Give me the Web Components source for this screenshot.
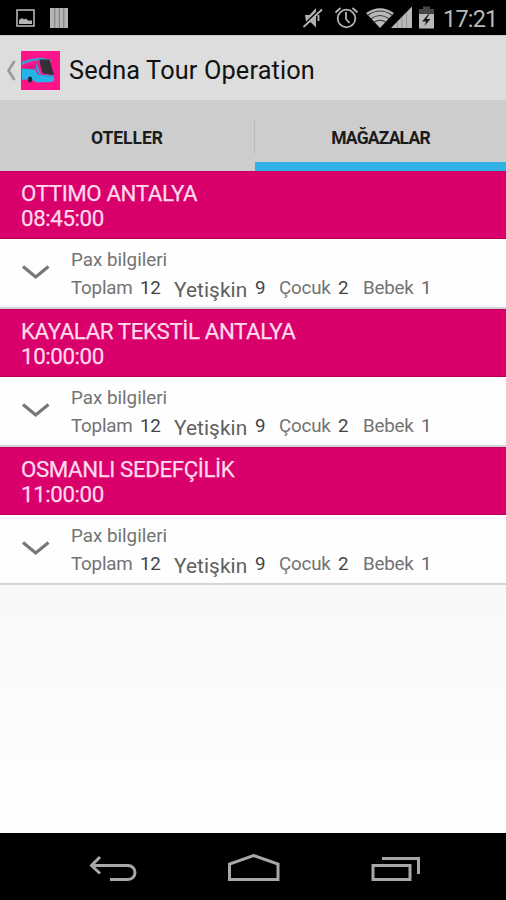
<!DOCTYPE html>
<html lang="tr">
<head>
<meta charset="utf-8">
<title>Sedna Tour Operation</title>
<style>
body {
  margin: 0;
  font-family: Roboto, "Liberation Sans", sans-serif;
}
</style>
</head>
<body>

<tour-screen>
  <status-bar slot="top" time="17:21"></status-bar>
  <action-bar slot="top" heading="Sedna Tour Operation"></action-bar>
  <tab-bar slot="top">
    <tab-item>OTELLER</tab-item>
    <tab-item active>MAĞAZALAR</tab-item>
  </tab-bar>
  <shop-card name="OTTIMO ANTALYA" time="08:45:00"></shop-card>
  <shop-card name="KAYALAR TEKSTİL ANTALYA" time="10:00:00"></shop-card>
  <shop-card name="OSMANLI SEDEFÇİLİK" time="11:00:00"></shop-card>
  <nav-bar slot="bottom"></nav-bar>
</tour-screen>

<script>
function attachTemplate(element, html) {
  const template = document.createElement('template')
  template.innerHTML = html
  element.attachShadow({ mode: 'open' })
  element.shadowRoot.appendChild(template.content.cloneNode(true))
}

class TourScreen extends HTMLElement {
  constructor() {
    super()
    attachTemplate(this, `
      <style>
        :host {
          display: flex;
          flex-direction: column;
          height: 900px;
          overflow: hidden;
        }
        main {
          flex: 1;
          background: linear-gradient(#f5f5f5, #f8f8f8 62%, #fff);
        }
      </style>
      <slot name="top"></slot>
      <main><slot></slot></main>
      <slot name="bottom"></slot>
    `)
  }
}
customElements.define('tour-screen', TourScreen)

class StatusBar extends HTMLElement {
  constructor() {
    super()
    attachTemplate(this, `
      <style>
        :host {
          display: flex;
          justify-content: space-between;
          height: 35px;
          background: #000;
          color: #b9b9b9;
          border-bottom: 1px solid #c9c9c9;
        }
        svg { display: block; }
        .right { display: flex; }
        .time {
          width: 63px;
          font-size: 23.5px;
          line-height: 38px;
          letter-spacing: -0.8px;
          white-space: nowrap;
        }
      </style>
      <svg width="80" height="35" viewBox="0 0 80 35">
        <rect x="17" y="10" width="17" height="16" fill="none" stroke="#b5b5b5" stroke-width="1.6"/>
        <path d="M19 24v-4l3-2 2 1.500 2-1 2 2h4v3.500z" fill="#b5b5b5"/>
        <path d="M50 8h18v20H50z" fill="#b5b5b5"/>
        <path d="M54.8 8v20M59.3 8v20M63.8 8v20" stroke="#777"/>
      </svg>
      <div class="right">
        <svg width="141" height="35" viewBox="302 0 141 35">
          <path d="M305 15h4.500l6.500-7v19.500l-5-5-5-.5z" fill="#b0b0b0"/>
          <path d="M303.500 25.500L321 8.500" stroke="#000" stroke-width="2"/>
          <path d="M303.500 27L322 9.500M318.500 15v6" stroke="#b5b5b5" stroke-width="1.800"/>
          <g fill="none" stroke="#b5b5b5" stroke-width="1.800">
            <circle cx="346.500" cy="18.500" r="8.800"/>
            <path d="M346 12v7l3.500 4M335.500 12.500l5-4.500M357.500 12.500l-5-4.500"/>
          </g>
          <path d="M366 13Q380 3.500 394 13L380 28z" fill="#b9b9b9"/>
          <path d="M367.500 15.500Q380 6.500 392.500 15.500M370.500 19Q380 12 389.500 19M373.800 22.500Q380 18 386.200 22.500" fill="none" stroke="#383838" stroke-width="1.100"/>
          <path d="M391 28l21-21.500v21.500z" fill="#b9b9b9"/>
          <path d="M397.500 21v7M402 17v11M406.500 12v16" stroke="#888" stroke-width=".8"/>
          <path d="M419 9h4V6.500h7V9h4v5h-15z" fill="#454545"/>
          <path d="M419 14h15v14.500h-15z" fill="#b9b9b9"/>
          <path d="M428.500 14L422 21.500h4l-1.500 4.500 6-7h-4l3-5z" fill="#181818"/>
        </svg>
        <div class="time"></div>
      </div>
    `)
  }

  connectedCallback() {
    this.shadowRoot.querySelector('.time').textContent = this.getAttribute('time')
  }
}
customElements.define('status-bar', StatusBar)

class ActionBar extends HTMLElement {
  constructor() {
    super()
    attachTemplate(this, `
      <style>
        :host {
          display: flex;
          align-items: center;
          height: 64px;
          padding-left: 6px;
          background: #ddd;
        }
        svg { display: block; margin-top: 3px; }
        h1 {
          margin: 5px 0 0 9px;
          font-size: 25.3px;
          line-height: 30px;
          font-weight: 400;
          letter-spacing: 0.15px;
          color: #111;
          white-space: nowrap;
        }
      </style>
      <svg width="54" height="40" viewBox="6 49 54 40">
        <path d="M14.500 60L8.500 69.500l6 9.500" fill="none" stroke="#999" stroke-width="2.600"/>
        <path d="M21 50h39v39H21z" fill="#ff1388"/>
        <path d="M22 60.500Q30 57.500 40 56.500l11 2 .5 2-13-1Q30 60 22 64z" fill="#4c96cd"/>
        <path d="M23 65.500l13-2 3 6.500-3-1.500-13-.5z" fill="#e01682"/>
        <path d="M22 67.500l13 1 3 5.500 5 .5 11 .5v5l-3 1-14 .5-4-2-11-1z" fill="#24b4e8"/>
        <path d="M36 61l5 12.500 13 1v2l-14-1.500-4-7z" fill="#2f9cdb"/>
        <path d="M39.500 58.500h10L54 74l-11-1.500q-2.500-5-3.500-14z" fill="#303238"/>
        <ellipse cx="30" cy="78.500" rx="2.200" ry="3" fill="#252a34"/>
      </svg>
      <h1></h1>
    `)
  }

  connectedCallback() {
    this.shadowRoot.querySelector('h1').textContent = this.getAttribute('heading')
  }
}
customElements.define('action-bar', ActionBar)

class TabBar extends HTMLElement {
  constructor() {
    super()
    attachTemplate(this, `
      <style>
        :host {
          display: grid;
          grid-template-columns: 254px 1px 251px;
          height: 71px;
          background: #cdcdcd;
        }
        i { order: 1; height: 34px; margin-top: 20px; background: #bcbcbc; }
        ::slotted([active]) { order: 2; }
      </style>
      <slot></slot>
      <i></i>
    `)
  }
}
customElements.define('tab-bar', TabBar)

class TabItem extends HTMLElement {
  constructor() {
    super()
    attachTemplate(this, `
      <style>
        :host {
          display: block;
          box-sizing: border-box;
          height: 71px;
          padding-top: 27px;
          text-align: center;
          font-size: 17.5px;
          line-height: 22px;
          font-weight: 700;
          color: #1b1b1b;
        }
        :host([active]) {
          border-bottom: 9px solid #30b3e4;
          letter-spacing: -0.8px;
        }
      </style>
      <slot></slot>
    `)
  }
}
customElements.define('tab-item', TabItem)

class PaxInfo extends HTMLElement {
  constructor() {
    super()
    attachTemplate(this, `
      <style>
        :host {
          display: block;
          padding-top: 9px;
          font-size: 18.8px;
          line-height: 24px;
          color: #737373;
          white-space: nowrap;
        }
        .counts {
          display: grid;
          grid-template-columns: 69px 34px 81px 24px 59px 25px 58px 20px;
          margin-top: 4px;
          letter-spacing: -0.2px;
        }
        b { font-weight: 400; color: #444; }
        b.last { color: #686868; }
        .adult {
          margin-top: 2px;
          font-size: 20.8px;
          letter-spacing: 0.1px;
          color: #606060;
        }
      </style>
      <div>Pax bilgileri</div>
      <div class="counts">
        <span>Toplam</span><b>12</b>
        <span class="adult">Yetişkin</span><b>9</b>
        <span>Çocuk</span><b>2</b>
        <span>Bebek</span><b class="last">1</b>
      </div>
    `)
  }
}
customElements.define('pax-info', PaxInfo)

class ShopCard extends HTMLElement {
  constructor() {
    super()
    attachTemplate(this, `
      <style>
        :host { display: block; }
        header {
          box-sizing: border-box;
          height: 68px;
          padding: 9px 0 0 21px;
          background: #d9006c;
          border-top: 1px solid #c40062;
          border-bottom: 1px solid #b8005b;
          color: #ffd9ea;
          font-size: 22.3px;
          line-height: 25px;
          letter-spacing: -0.4px;
          -webkit-text-stroke: 0.25px #ffd9ea;
          white-space: nowrap;
        }
        section {
          box-sizing: border-box;
          display: flex;
          height: 70px;
          background: #fefefe;
          border-bottom: 2px solid #d4d4d4;
        }
        svg { display: block; width: 71px; height: 68px; }
      </style>
      <header>
        <div class="name"></div>
        <div class="time"></div>
      </header>
      <section>
        <svg viewBox="0 0 71 68">
          <path d="M23 27.500l12.700 10.500 12.800-10.500" fill="none" stroke="#777" stroke-width="3.200"/>
        </svg>
        <pax-info></pax-info>
      </section>
    `)
  }

  connectedCallback() {
    this.shadowRoot.querySelector('.name').textContent = this.getAttribute('name')
    this.shadowRoot.querySelector('.time').textContent = this.getAttribute('time')
  }
}
customElements.define('shop-card', ShopCard)

class NavBar extends HTMLElement {
  constructor() {
    super()
    attachTemplate(this, `
      <style>
        :host { display: block; height: 67px; background: #000; }
        svg { display: block; }
      </style>
      <svg width="506" height="67" viewBox="0 833 506 67" fill="none" stroke="#a8a8a8" stroke-width="3">
        <path d="M92 865.500h36a6.800 6.800 0 0 1 0 14H110M100 857l-8.500 8.500 8.500 8"/>
        <path d="M229.500 879.500v-15.500l24-8.500 24.500 8.500v15.500z"/>
        <path d="M373 865.500h37v14h-37zM382 858.500h36.500v15.500"/>
      </svg>
    `)
  }
}
customElements.define('nav-bar', NavBar)
</script>
</body>
</html>
